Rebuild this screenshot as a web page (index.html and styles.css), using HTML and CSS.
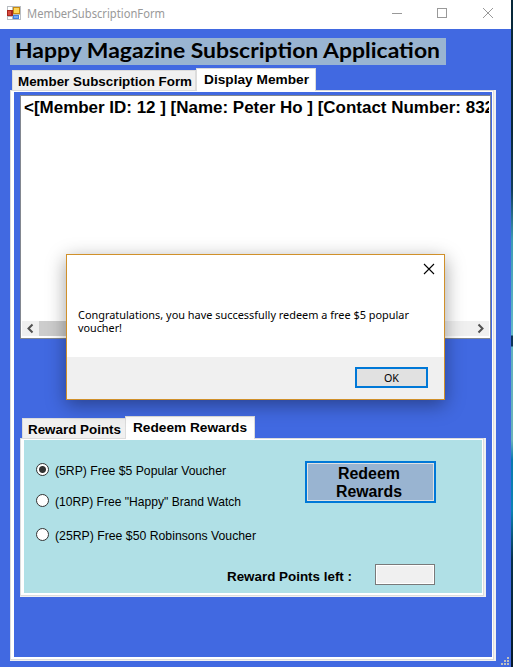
FILE: index.html
```html
<!DOCTYPE html>
<html lang="en">
<head>
<meta charset="utf-8">
<title>MemberSubscriptionForm</title>
<link rel="stylesheet" href="styles.css">
</head>
<body>
<div class="desktop">
<div class="window">
  <header class="titlebar">
    <svg class="app-icon" width="14" height="14" shape-rendering="crispEdges">
      <rect width="14" height="14" fill="#b9bdc2"/><rect x="1" y="1" width="4" height="3" fill="#fff"/><rect x="1" y="11" width="4" height="2" fill="#fff"/><rect x="12" y="9" width="1" height="4" fill="#fff"/>
      <rect y="4" width="6" height="6" fill="#a5251c"/><rect x="1" y="5" width="3" height="4" fill="#d8493e"/>
      <rect x="6" y="1" width="7" height="7" fill="#c78a13"/><rect x="7" y="2" width="5" height="5" fill="#ffd75a"/>
      <rect x="6" y="9" width="6" height="4" fill="#407fe0"/><rect x="7" y="10" width="4" height="2" fill="#79aaf4"/>
    </svg>
    <svg class="title" width="138" height="29"><text x="0" y="18" textLength="138" lengthAdjust="spacingAndGlyphs">MemberSubscriptionForm</text></svg>
    <svg class="controls" width="104" height="29" shape-rendering="crispEdges">
      <path d="M0 13.5H10M45.500 8.500h9v9h-9z"/><path shape-rendering="auto" d="M91 8l10 10M101 8l-10 10"/>
    </svg>
  </header>
  <main class="client">
    <h1 class="banner"><svg width="436" height="27"><text x="5" y="20" textLength="425" lengthAdjust="spacingAndGlyphs">Happy Magazine Subscription Application</text></svg></h1>
    <section class="tabs outer">
      <nav class="tabstrip">
        <div class="tab first"><svg width="184" height="20"><text x="6" y="16" textLength="174" lengthAdjust="spacingAndGlyphs">Member Subscription Form</text></svg></div>
        <div class="tab active second"><svg width="118" height="21"><text x="7" y="15" textLength="105" lengthAdjust="spacingAndGlyphs">Display Member</text></svg></div>
      </nav>
      <div class="page outer-page">
        <div class="listbox">
          <div class="list-row"><svg width="467" height="22"><text x="2" y="16" textLength="470" lengthAdjust="spacingAndGlyphs">&lt;[Member ID: 12 ] [Name: Peter Ho ] [Contact Number: 832</text></svg></div>
          <div class="scrollbar">
            <svg width="17" height="15"><path d="M10.500 3.500L6.500 7.500L10.500 11.500"/></svg>
            <div class="thumb"></div>
            <svg width="17" height="15"><path d="M6.500 3.500L10.500 7.500L6.500 11.500"/></svg>
          </div>
        </div>
        <section class="tabs inner">
          <nav class="tabstrip">
            <div class="tab first"><svg width="103" height="20"><text x="6" y="16" textLength="93" lengthAdjust="spacingAndGlyphs">Reward Points</text></svg></div>
            <div class="tab active second"><svg width="128" height="21"><text x="7" y="15" textLength="114" lengthAdjust="spacingAndGlyphs">Redeem Rewards</text></svg></div>
          </nav>
          <div class="page inner-page">
            <div class="choices">
              <div class="options">
                <div class="option"><span class="radio checked"></span><svg width="172" height="17"><text x="0" y="12" textLength="171" lengthAdjust="spacingAndGlyphs">(5RP) Free $5 Popular Voucher</text></svg></div>
                <div class="option"><span class="radio"></span><svg width="187" height="17"><text x="0" y="12" textLength="186" lengthAdjust="spacingAndGlyphs">(10RP) Free "Happy" Brand Watch</text></svg></div>
                <div class="option last"><span class="radio"></span><svg width="202" height="17"><text x="0" y="12" textLength="201" lengthAdjust="spacingAndGlyphs">(25RP) Free $50 Robinsons Voucher</text></svg></div>
              </div>
              <div class="redeem"><svg width="125" height="36"><text x="30" y="15" textLength="62" lengthAdjust="spacingAndGlyphs">Redeem</text><text x="28" y="33" textLength="66" lengthAdjust="spacingAndGlyphs">Rewards</text></svg></div>
            </div>
            <div class="points">
              <svg width="125" height="21"><text x="0" y="17" textLength="125" lengthAdjust="spacingAndGlyphs">Reward Points left :</text></svg>
              <div class="field"></div>
            </div>
          </div>
        </section>
      </div>
    </section>
  </main>
  <svg class="grip" width="8" height="8" shape-rendering="crispEdges"><path d="M6 0h2v2H6zM3 3h2v2H3zM6 3h2v2H6zM0 6h2v2H0zM3 6h2v2H3zM6 6h2v2H6z" fill="#bfbfbf"/></svg>
  <div class="dialog">
    <div class="dialog-body">
      <svg class="dialog-close" width="12" height="12"><path d="M1 1l10 10M11 1L1 11"/></svg>
      <svg class="message" width="334" height="28"><text x="0" y="12" textLength="331" lengthAdjust="spacingAndGlyphs">Congratulations, you have successfully redeem a free $5 popular</text><text x="0" y="25" textLength="44" lengthAdjust="spacingAndGlyphs">voucher!</text></svg>
    </div>
    <div class="dialog-footer"><div class="ok"><svg width="69" height="17"><text x="27" y="13" textLength="15" lengthAdjust="spacingAndGlyphs">OK</text></svg></div></div>
  </div>
</div>
<div class="edge"></div>
</div>
</body>
</html>
```
FILE: styles.css
```css
* { box-sizing: border-box; }
body { margin: 0; font-family: "Liberation Sans", Arial, sans-serif; }
svg { display: block; flex: none; overflow: visible; }
.desktop { display: flex; width: 513px; height: 667px; overflow: hidden; }
.window { position: relative; width: 511px; height: 667px; background: #4169e1; }
.edge { width: 2px; background: linear-gradient(#082839 0, #082839 130px, #123e5b 190px, #3b9bb5 240px, #62b9c8 335px, #0c3658 336px, #0c3658 346px, #5fb0bf 347px, #68b3b9 440px, #087ab0 460px, #0a84b5 510px, #06304b 560px, #06192a 667px); }
.titlebar { display: flex; height: 29px; background: #fff; }
.app-icon { margin: 6px 0 0 7px; }
.title { margin-left: 6px; font: 12px "Noto Sans", sans-serif; fill: #999; }
.controls { margin-left: 227px; fill: none; stroke: #999; }
.client { padding: 9px 0 0 10px; }
.banner { margin: 0; width: 436px; height: 27px; background: #99b4d1; font: bold 20px Lato, sans-serif; }
.tabstrip { display: flex; align-items: flex-end; padding-left: 2px; font-weight: bold; font-size: 13px; }
.tab { height: 20px; background: #f0f0f0; border: 1px solid #dcdcdc; border-bottom: 0; }
.tab svg { margin: -1px 0 0 -1px; }
.tab.active { height: 23px; margin-bottom: -1px; background: #fff; position: relative; }
.tab.active svg { margin: 0; }
.outer { width: 486px; margin-top: 3px; }
.outer .first { width: 184px; }
.outer > .tabstrip .second { width: 120px; }
.page { border: 1px solid #dcdcdc; }
.outer-page { width: 484px; height: 570px; padding: 3px 0 0 6px; background: #4169e1; box-shadow: inset 3px 1px 0 #fff, inset -1px -2px 0 #fff, 2px 0 0 #f0f0f0, 2px 1px 0 #f0f0f0, 0 1px 0 #f0f0f0; }
.listbox { display: flex; flex-direction: column; justify-content: space-between; width: 471px; height: 244px; margin: 1px 0 0 3px; padding: 1px 1px 2px; background: #fff; border: 1px solid #828790; }
.list-row { font-weight: bold; font-size: 16px; overflow: hidden; }
.scrollbar { display: flex; height: 15px; background: #f0f0f0; fill: none; stroke: #505050; stroke-width: 2; }
.thumb { width: 360px; margin-right: 73px; background: #cdcdcd; }
.inner { width: 466px; margin: 77px 0 0 3px; }
.inner > .tabstrip .first { width: 104px; margin-right: -1px; }
.inner > .tabstrip .second { width: 130px; }
.inner-page { width: 464px; height: 158px; background: #b0e0e6; box-shadow: inset 3px 1px 0 #fff, inset -1px -2px 0 #fff, 2px 0 0 #f0f0f0, 2px 1px 0 #f0f0f0, 0 1px 0 #f0f0f0; }
.choices { display: flex; padding: 22px 0 0 15px; }
.options { width: 269px; padding-top: 2px; font-size: 13px; }
.option { display: flex; align-items: flex-start; height: 31px; }
.option:nth-child(2) { height: 34px; }
.option.last { height: 29px; }
.radio { width: 13px; height: 13px; margin-right: 6px; border: 1px solid #333; border-radius: 50%; background: #fff; }
.radio.checked { background: radial-gradient(circle, #333 0 3px, #fff 4px); }
.redeem { width: 131px; height: 42px; border: 2px solid #0078d7; background: #99b4d1; box-shadow: inset 0 0 0 1px #e1e1e1; font-size: 16px; font-weight: bold; padding: 1px; }
.points { display: flex; margin: 7px 0 0 206px; font-size: 13px; font-weight: bold; }
.field { width: 60px; height: 21px; margin-left: 23px; border: 1px solid #7a7a7a; background: #f0f0f0; box-shadow: inset 0 0 0 1px #fff; }
.grip { position: absolute; right: 2px; bottom: 2px; }
.dialog { position: absolute; left: 66px; top: 254px; width: 379px; height: 146px; border: 1px solid #d0902a; background: #fff; box-shadow: 0 5px 18px rgba(0,0,0,.38); font: 11.5px "Noto Sans", sans-serif; }
.dialog-body { height: 102px; padding: 8px 9px 0 11px; }
.dialog-close { margin-left: auto; fill: none; stroke: #000; stroke-width: 1.1; }
.message { margin-top: 32px; }
.dialog-footer { height: 42px; padding: 10px 16px 0 0; background: #f0f0f0; }
.ok { width: 73px; height: 21px; margin-left: auto; border: 2px solid #0078d7; background: #e1e1e1; }
```
